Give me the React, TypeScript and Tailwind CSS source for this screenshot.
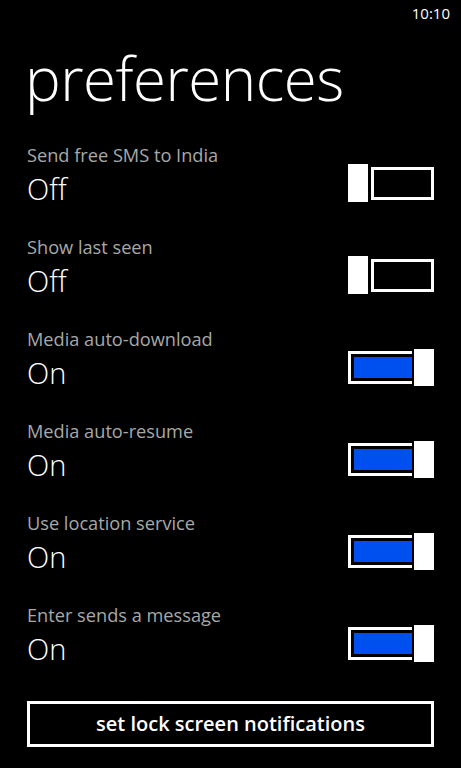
import { useState } from 'react';

interface Pref {
  label: string;
  on: boolean;
}

const initialPrefs: Pref[] = [
  { label: 'Send free SMS to India', on: false },
  { label: 'Show last seen', on: false },
  { label: 'Media auto-download', on: true },
  { label: 'Media auto-resume', on: true },
  { label: 'Use location service', on: true },
  { label: 'Enter sends a message', on: true },
];

function Toggle({ on, onClick }: { on: boolean; onClick: () => void }) {
  return (
    <button onClick={onClick} className="flex h-[38px] w-[86px] items-center">
      {on ? (
        <>
          <div className="flex h-[33px] w-[64px] items-center border-y-[3px] border-l-[3px] border-white py-[3px] pl-[3px]">
            <div className="h-full flex-1 bg-[#0050ef]" />
          </div>
          <div className="ml-[2px] h-[37px] w-[20px] bg-white" />
        </>
      ) : (
        <>
          <div className="h-[38px] w-[20px] bg-white" />
          <div className="ml-[3px] h-[33px] flex-1 border-[3px] border-white" />
        </>
      )}
    </button>
  );
}

export default function App() {
  const [prefs, setPrefs] = useState(initialPrefs);

  function flip(i: number) {
    setPrefs((prev) => prev.map((p, idx) => (idx === i ? { ...p, on: !p.on } : p)));
  }

  return (
    <div
      className="h-[768px] w-[461px] overflow-hidden bg-black text-white"
      style={{ fontFamily: '"Open Sans", "Noto Sans", sans-serif' }}
    >
      <div className="flex h-[26px] items-center justify-end pr-[11px] text-[15px]">10:10</div>
      <h1 className="ml-[25px] mt-[12px] text-[60px] font-light leading-[80px] tracking-[-0.5px]">
        preferences
      </h1>
      <div className="mt-[24px] pl-[27px] pr-[27px]">
        {prefs.map((p, i) => (
          <div key={p.label} className="flex h-[92px] items-start justify-between">
            <div className="flex flex-col">
              <span className="text-[18.2px] leading-[26px] text-[#a8a8a8]">{p.label}</span>
              <span className="text-[29px] font-light leading-[42px]">{p.on ? 'On' : 'Off'}</span>
            </div>
            <div className="mt-[22px]">
              <Toggle on={p.on} onClick={() => flip(i)} />
            </div>
          </div>
        ))}
      </div>
      <div className="mt-[7px] px-[27px]">
        <button className="flex h-[46px] w-full items-center justify-center border-[3px] border-white text-[20px] font-semibold">
          set lock screen notifications
        </button>
      </div>
    </div>
  );
}
